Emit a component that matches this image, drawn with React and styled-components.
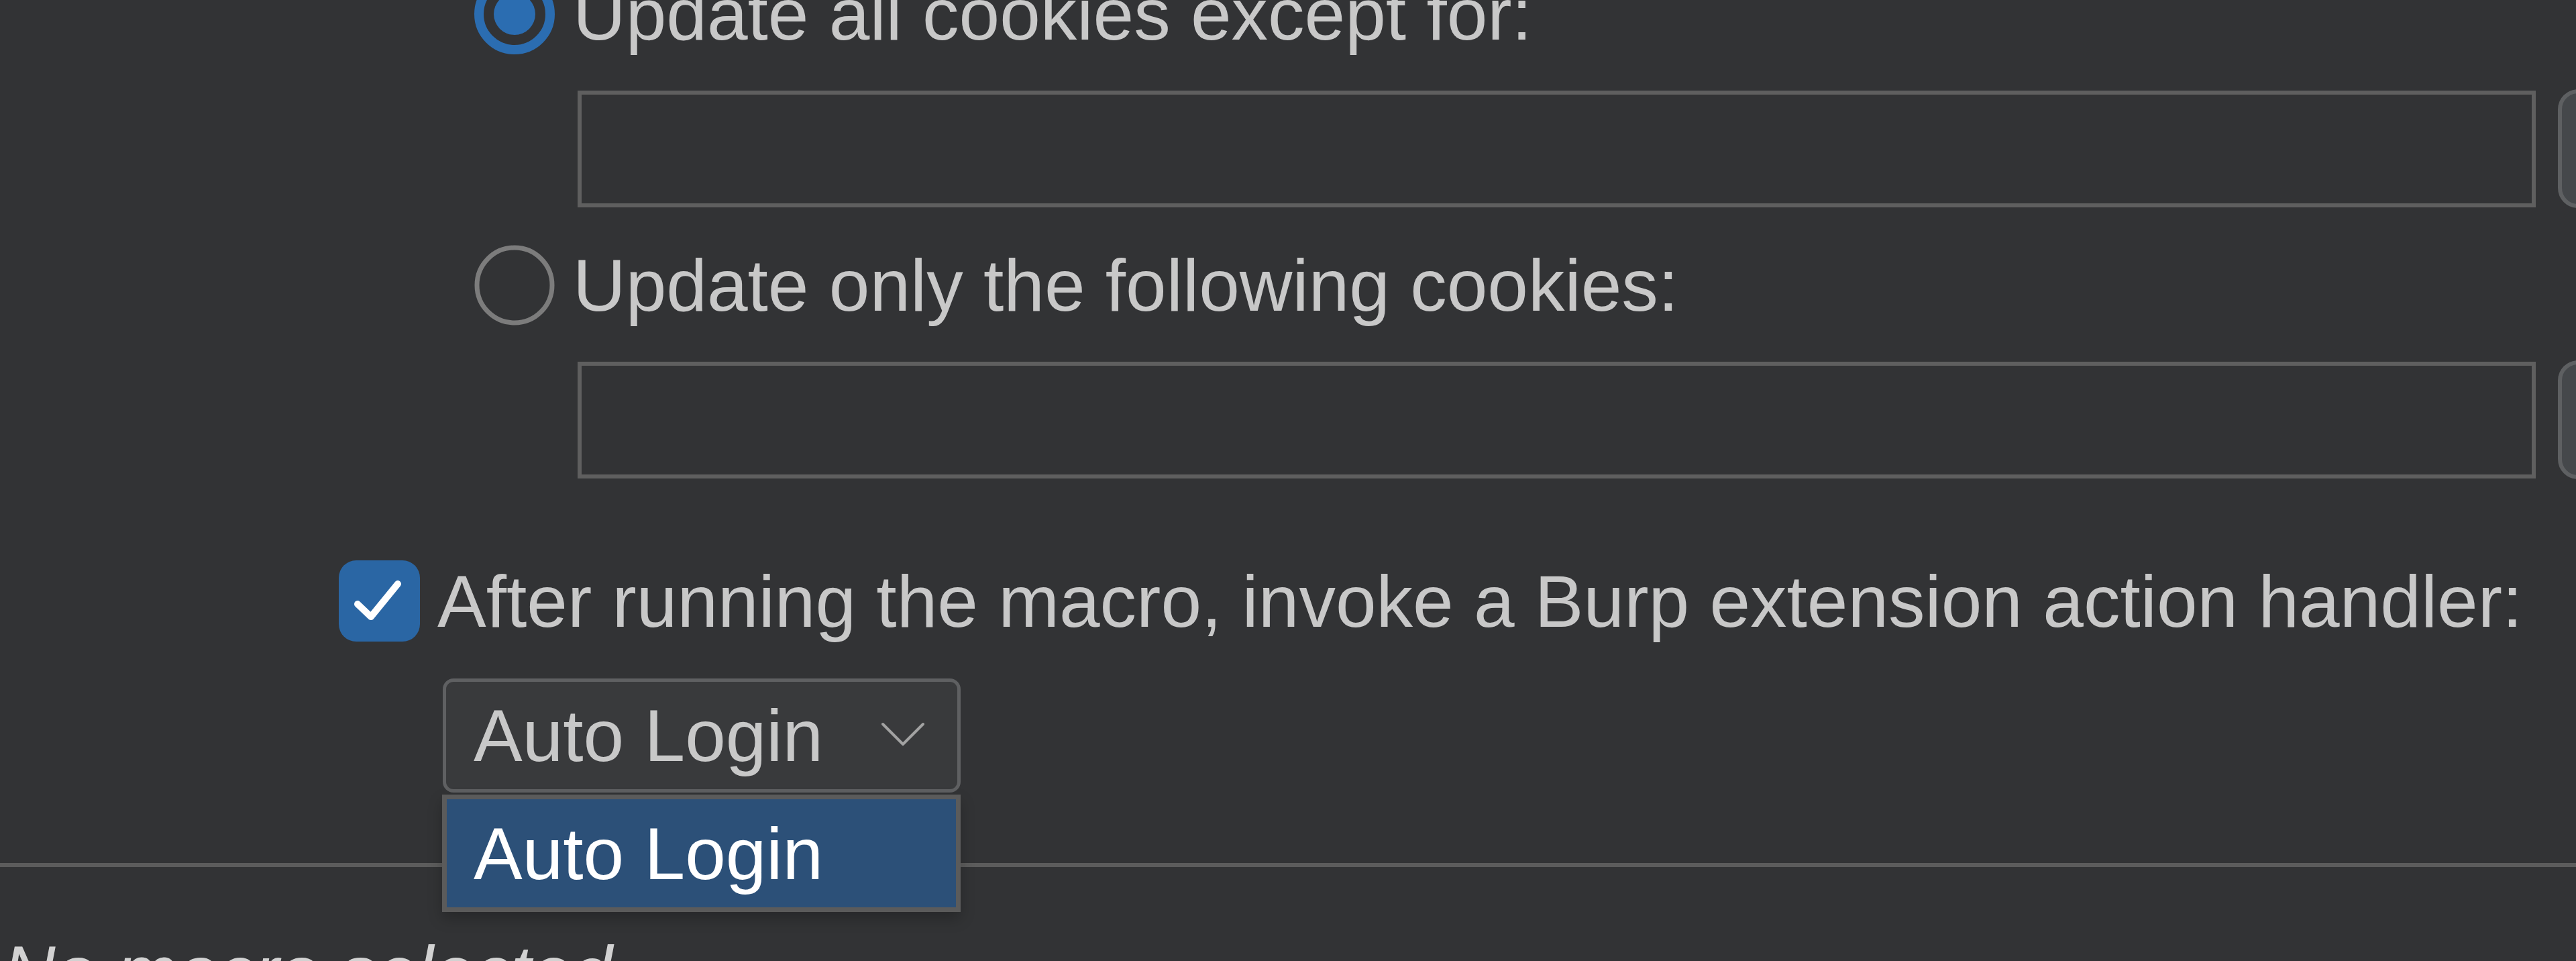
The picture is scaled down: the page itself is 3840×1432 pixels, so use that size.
import React from "react";
import styled, { createGlobalStyle } from "styled-components";

const GlobalStyle = createGlobalStyle`
  html, body {
    margin: 0;
    padding: 0;
    background: #323335;
  }
  body {
    width: 3840px;
    height: 1432px;
    overflow: hidden;
    font-family: "Liberation Sans", Arial, sans-serif;
  }
`;

const Page = styled.div`
  width: 3840px;
  height: 1432px;
  overflow: hidden;
  background: #323335;
  display: flex;
  flex-direction: column;
`;

const Options = styled.div`
  margin-top: -39px;
  padding-left: 505px;
  display: flex;
  flex-direction: column;
  flex-shrink: 0;
`;

const RadioGroup = styled.div`
  margin-left: 202px;
  display: flex;
  flex-direction: column;
`;

const OptionRow = styled.label`
  display: flex;
  align-items: center;
  gap: ${(p) => p.$gap || 27}px;
  height: ${(p) => p.$h || 120}px;
  margin-top: ${(p) => p.$mt || 0}px;
  font-size: 109px;
  line-height: 120px;
  color: #c8c8c8;
  white-space: nowrap;
`;

const RadioMark = styled.svg`
  width: 120px;
  height: 120px;
  flex-shrink: 0;
  display: block;
`;

const FieldRow = styled.div`
  display: flex;
  gap: 33px;
  margin-left: 154px;
  margin-top: 54px;
  height: 175px;
`;

const TextField = styled.div`
  box-sizing: border-box;
  width: 2919px;
  height: 174px;
  flex-shrink: 0;
  border: 6px solid #5f5f5f;
  background: #323335;
`;

const SideButton = styled.div`
  box-sizing: border-box;
  width: 260px;
  height: 177px;
  margin-top: -2px;
  flex-shrink: 0;
  border: 6px solid #5e6062;
  border-radius: 30px;
  background: #45484b;
`;

const CheckBox = styled.div`
  box-sizing: border-box;
  width: 121px;
  height: 121px;
  flex-shrink: 0;
  border-radius: 26px;
  background: #2a66a4;
  display: flex;
`;

const ComboWrap = styled.div`
  position: relative;
  margin-left: 155px;
  margin-top: 55px;
  width: 772px;
  height: 170px;
`;

const Combo = styled.div`
  box-sizing: border-box;
  width: 100%;
  height: 100%;
  border: 5px solid #5f6062;
  border-radius: 16px;
  background: #393a3c;
  display: flex;
  align-items: center;
  justify-content: space-between;
  padding-left: 41px;
  padding-right: 49px;
  font-size: 109px;
  line-height: 120px;
  color: #c8c8c8;
  white-space: nowrap;
`;

const Chevron = styled.svg`
  width: 64px;
  height: 36px;
  display: block;
  margin-top: -4px;
`;

const Popup = styled.div`
  position: absolute;
  z-index: 5;
  top: calc(100% + 3px);
  left: -1px;
  box-sizing: border-box;
  width: 773px;
  height: 175px;
  border: 7px solid #5b5b5b;
  background: #2c5078;
  box-shadow: 0 10px 20px rgba(0, 0, 0, 0.22);
  display: flex;
  flex-direction: column;
`;

const PopupItem = styled.div`
  flex: 1;
  display: flex;
  align-items: center;
  padding-left: 40px;
  font-size: 109px;
  line-height: 120px;
  color: #ffffff;
  white-space: nowrap;
`;

const Separator = styled.div`
  flex-shrink: 0;
  height: 6px;
  margin-top: 105px;
  background: #5c5c5c;
`;

const Status = styled.div`
  margin-top: 96px;
  padding-left: 4px;
  font-size: 109px;
  line-height: 120px;
  font-style: italic;
  color: #d2d2d2;
  white-space: nowrap;
`;

function Radio({ checked }) {
  return checked ? (
    <RadioMark viewBox="0 0 120 120">
      <circle cx="60" cy="60" r="53" fill="none" stroke="#2b6db1" strokeWidth="14" />
      <circle cx="60" cy="60" r="31" fill="#2b6db1" />
    </RadioMark>
  ) : (
    <RadioMark viewBox="0 0 120 120">
      <circle cx="60" cy="60" r="56" fill="none" stroke="#7c7c7c" strokeWidth="7" />
    </RadioMark>
  );
}

export default function App() {
  return (
    <>
      <GlobalStyle />
      <Page>
        <Options>
          <RadioGroup>
            <OptionRow>
              <Radio checked />
              <span>Update all cookies except for:</span>
            </OptionRow>
            <FieldRow>
              <TextField />
              <SideButton />
            </FieldRow>
            <OptionRow $mt={55}>
              <Radio />
              <span>Update only the following cookies:</span>
            </OptionRow>
            <FieldRow>
              <TextField />
              <SideButton />
            </FieldRow>
          </RadioGroup>
          <OptionRow $mt={121} $h={121} $gap={26}>
            <CheckBox>
              <svg width="121" height="121" viewBox="0 0 121 121">
                <path
                  d="M28 65 L48 84 L88 35"
                  fill="none"
                  stroke="#ffffff"
                  strokeWidth="10"
                  strokeLinecap="round"
                  strokeLinejoin="round"
                />
              </svg>
            </CheckBox>
            <span>After running the macro, invoke a Burp extension action handler:</span>
          </OptionRow>
          <ComboWrap>
            <Combo>
              <span>Auto Login</span>
              <Chevron viewBox="0 0 64 36">
                <path
                  d="M2 3 L32 33 L62 3"
                  fill="none"
                  stroke="#a2a2a2"
                  strokeWidth="4"
                  strokeLinecap="round"
                  strokeLinejoin="round"
                />
              </Chevron>
            </Combo>
            <Popup>
              <PopupItem>Auto Login</PopupItem>
            </Popup>
          </ComboWrap>
        </Options>
        <Separator />
        <Status>No macro selected</Status>
      </Page>
    </>
  );
}
